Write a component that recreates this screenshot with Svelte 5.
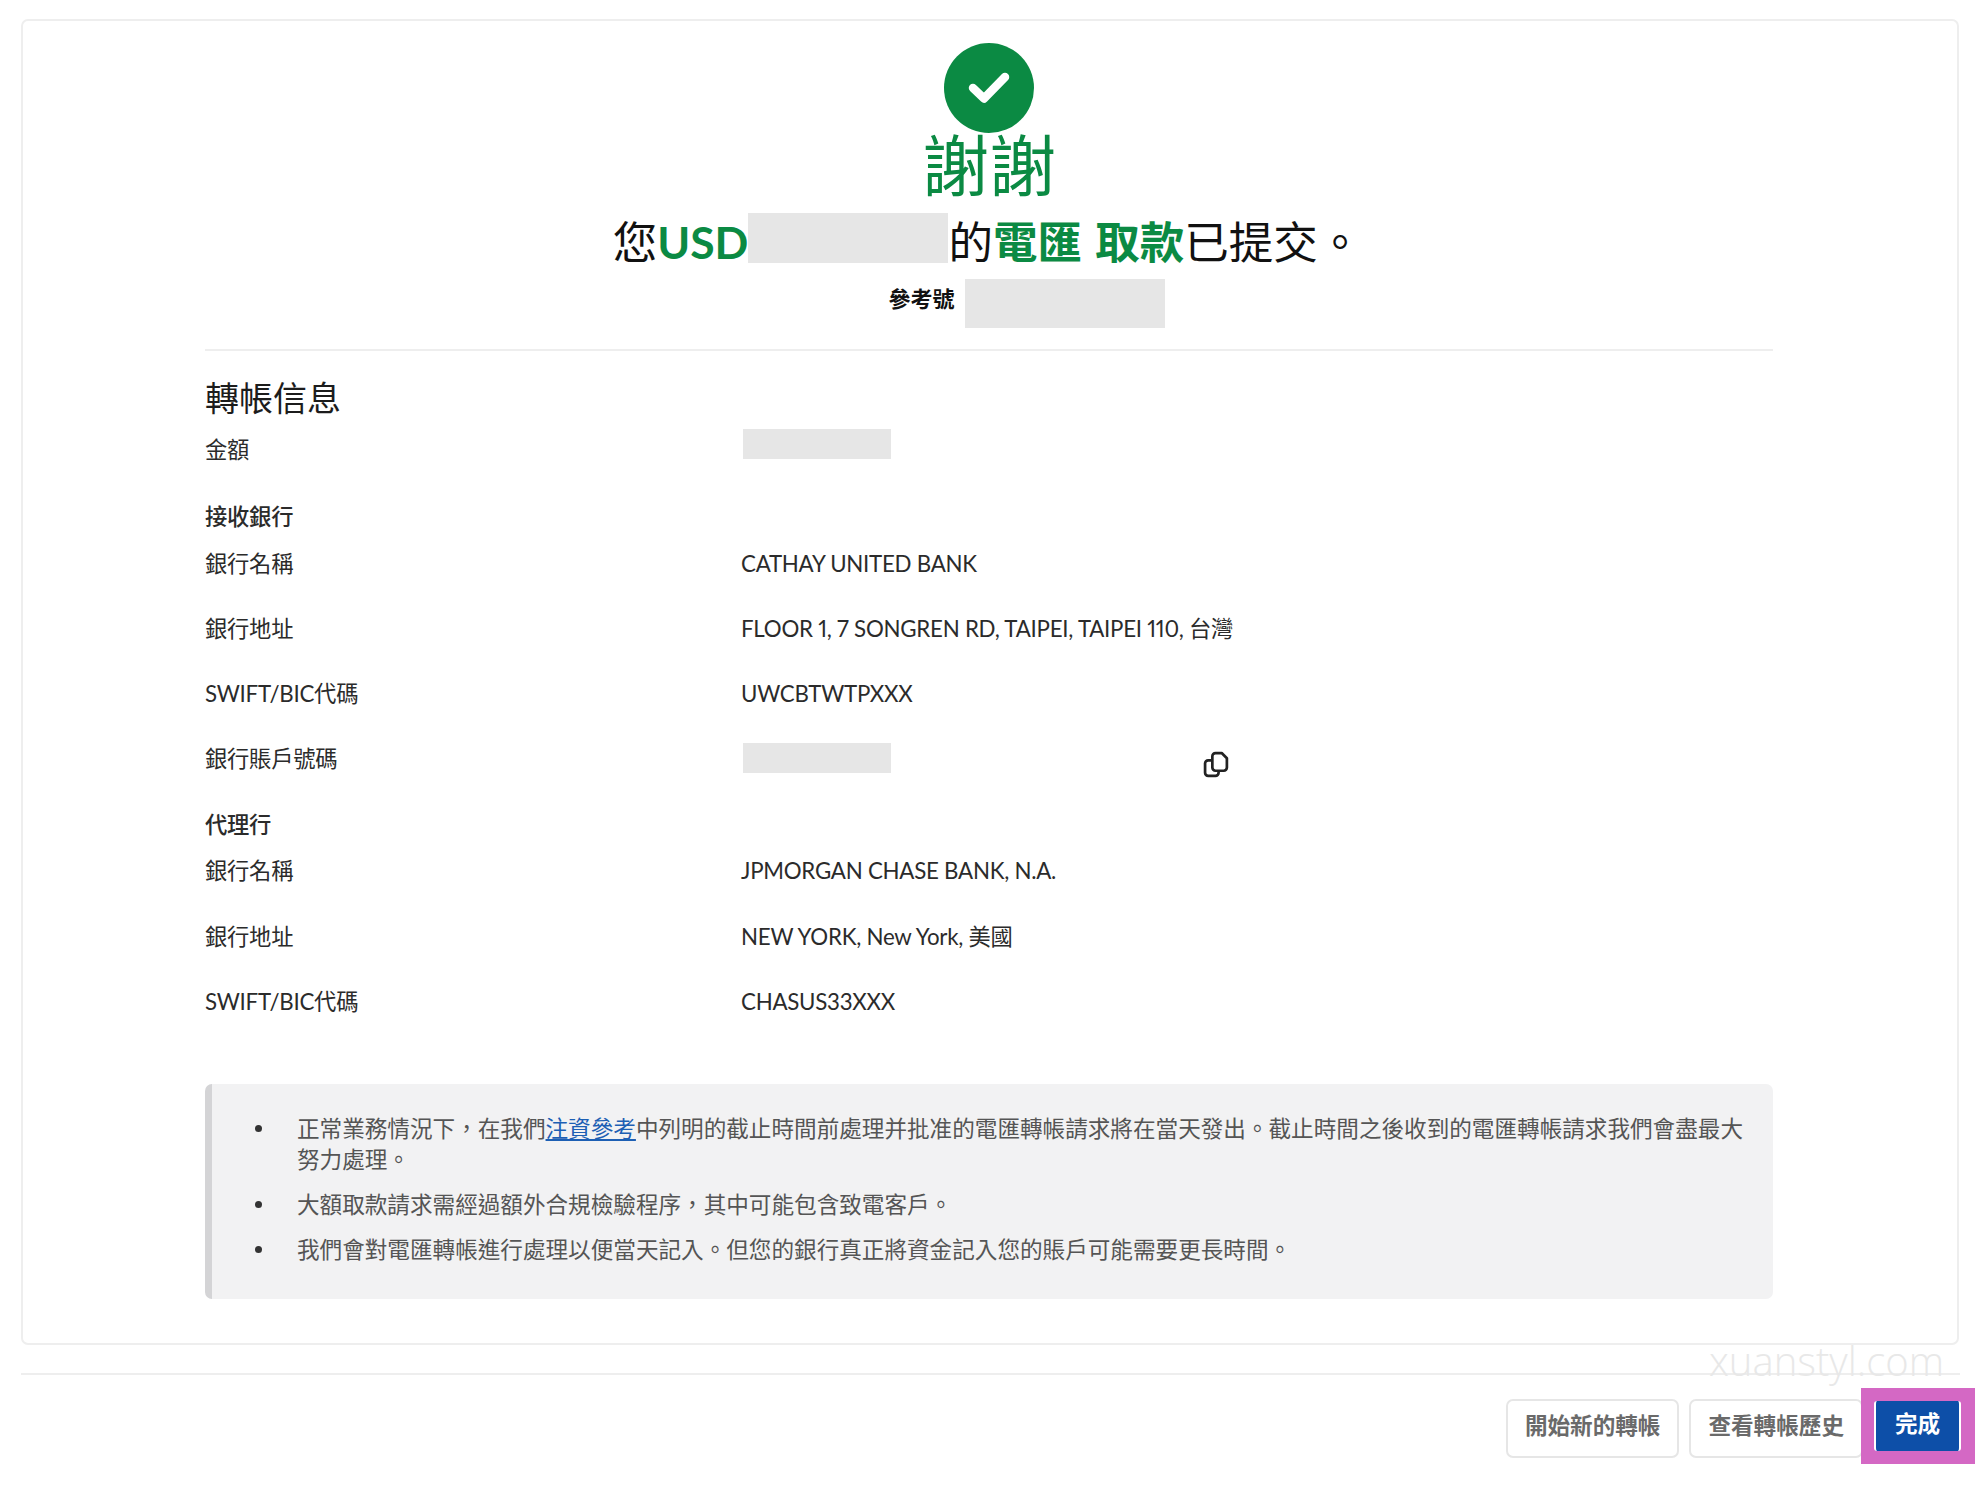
<script lang="ts">
  const receiving = [
    { label: "銀行名稱", value: "CATHAY UNITED BANK" },
    { label: "銀行地址", value: "FLOOR 1, 7 SONGREN RD, TAIPEI, TAIPEI 110, 台灣" },
    { label: "SWIFT/BIC代碼", value: "UWCBTWTPXXX" },
  ];

  const intermediary = [
    { label: "銀行名稱", value: "JPMORGAN CHASE BANK, N.A." },
    { label: "銀行地址", value: "NEW YORK, New York, 美國" },
    { label: "SWIFT/BIC代碼", value: "CHASUS33XXX" },
  ];
</script>

<div class="page">
  <div class="card">
    <div class="hero">
      <svg class="check" viewBox="0 0 90 90" aria-hidden="true">
        <circle cx="45" cy="45" r="45" fill="#0b8a43" />
        <path d="M29 45 L40 55.5 L61 34" fill="none" stroke="#fff" stroke-width="8.5" stroke-linecap="round" stroke-linejoin="round" />
      </svg>
      <div class="thanks">謝謝</div>
      <div class="summary">
        <span>您</span><b>USD</b><span class="mask amount"></span><span>的</span><b>電匯 取款</b><span>已提交。</span>
      </div>
      <div class="reference">
        <span class="ref-label">參考號</span>
        <span class="mask ref"></span>
      </div>
    </div>

    <div class="details">
      <h2>轉帳信息</h2>
      <div class="row first">
        <span>金額</span>
        <span class="mask value"></span>
      </div>

      <div class="group">接收銀行</div>
      {#each receiving as item}
        <div class="row">
          <span>{item.label}</span>
          <span>{item.value}</span>
        </div>
      {/each}
      <div class="row account">
        <span>銀行賬戶號碼</span>
        <span class="mask value"></span>
        <svg class="copy" viewBox="0 0 26 26" aria-hidden="true">
          <path d="M9 9 H5 a3 3 0 0 0 -3 3 V21 a3 3 0 0 0 3 3 H12 a3 3 0 0 0 3 -3 V19" fill="none" stroke="#222" stroke-width="2.6" />
          <path d="M12 2 H18 L23 7 V16 a3 3 0 0 1 -3 3 H12 a3 3 0 0 1 -3 -3 V5 a3 3 0 0 1 3 -3 Z" fill="none" stroke="#222" stroke-width="2.6" stroke-linejoin="round" />
        </svg>
      </div>

      <div class="group">代理行</div>
      {#each intermediary as item}
        <div class="row">
          <span>{item.label}</span>
          <span>{item.value}</span>
        </div>
      {/each}
    </div>

    <div class="notice">
      <ul>
        <li>正常業務情況下，在我們<a href="#refs">注資參考</a>中列明的截止時間前處理并批准的電匯轉帳請求將在當天發出。截止時間之後收到的電匯轉帳請求我們會盡最大努力處理。</li>
        <li>大額取款請求需經過額外合規檢驗程序，其中可能包含致電客戶。</li>
        <li>我們會對電匯轉帳進行處理以便當天記入。但您的銀行真正將資金記入您的賬戶可能需要更長時間。</li>
      </ul>
    </div>
  </div>

  <div class="footer">
    <span class="watermark">xuanstyl.com</span>
    <button class="btn">開始新的轉帳</button>
    <button class="btn second">查看轉帳歷史</button>
    <div class="highlight">
      <button class="btn primary">完成</button>
    </div>
  </div>
</div>

<style>
  :global(body) {
    margin: 0;
    background: #fff;
  }

  .page {
    width: 1987px;
    height: 1485px;
    box-sizing: border-box;
    padding: 19px 28px 0 21px;
    font-family: "Lato", "Noto Sans CJK TC", sans-serif;
    color: #2b2b2b;
    overflow: hidden;
  }

  .card {
    box-sizing: border-box;
    height: 1326px;
    padding: 22px 184px 0 182px;
    border: 2px solid #eee;
    border-radius: 7px;
  }

  .hero {
    display: flex;
    flex-direction: column;
    align-items: center;
    height: 306px;
    border-bottom: 2px solid #eee;
  }

  .check {
    width: 90px;
    height: 90px;
    flex: none;
  }

  .thanks {
    font-size: 67px;
    line-height: 64px;
    color: #0b8a43;
  }

  .summary {
    display: flex;
    align-items: flex-start;
    height: 50px;
    margin: 16px 0 0 -3px;
    font-size: 44.5px;
    line-height: 57px;
    word-spacing: 2.5px;
    color: #111;
    white-space: pre;
  }

  .summary b {
    font-weight: 700;
    color: #0b8a43;
  }

  .mask {
    display: block;
    background: #e6e6e6;
  }

  .amount {
    width: 200px;
    height: 50px;
  }

  .reference {
    display: flex;
    align-items: flex-start;
    margin: 16px 0 0 75px;
  }

  .ref-label {
    margin-right: 10px;
    font-size: 22px;
    font-weight: 700;
    line-height: 40px;
    color: #111;
  }

  .ref {
    width: 200px;
    height: 49px;
  }

  .details {
    padding-top: 29px;
    font-size: 22.3px;
    line-height: 30px;
    letter-spacing: -0.25px;
    font-variant-numeric: proportional-nums;
  }

  h2 {
    margin: 0;
    font-size: 34px;
    font-weight: 400;
    line-height: 36px;
    letter-spacing: 0;
    color: #1c1c1c;
  }

  .row {
    display: grid;
    grid-template-columns: 536px 1fr;
    height: 65.4px;
  }

  .row.first {
    height: 67px;
    margin-top: 19px;
    align-items: start;
  }

  .group {
    height: 46.5px;
    font-weight: 500;
  }

  .account {
    position: relative;
    height: 66px;
    margin-top: -1px;
  }

  .value {
    width: 148px;
    height: 30px;
    margin: -6px 0 0 2px;
  }

  .account .value {
    margin-top: -1px;
  }

  .copy {
    position: absolute;
    left: 998px;
    top: 7px;
    width: 27px;
    height: 27px;
  }

  .notice {
    box-sizing: border-box;
    height: 215px;
    margin-top: 32px;
    padding: 29px 24px 0 85px;
    border-left: 7px solid #d4d4d6;
    border-radius: 7px;
    background: #f2f2f3;
    font-size: 22.6px;
    line-height: 31px;
    color: #555;
  }

  ul {
    margin: 0;
    padding: 0;
    list-style: none;
  }

  li {
    position: relative;
  }

  li::before {
    content: "";
    position: absolute;
    left: -42px;
    top: 12px;
    width: 7px;
    height: 7px;
    border-radius: 50%;
    background: #333;
  }

  li + li {
    margin-top: 14px;
  }

  a {
    color: #1d5fb4;
    text-decoration: underline;
  }

  .footer {
    position: relative;
    display: flex;
    align-items: flex-start;
    justify-content: flex-end;
    height: 90px;
    margin-top: 28px;
    margin-right: -1px;
    padding-top: 24px;
    border-top: 2px solid #eee;
    box-sizing: border-box;
  }

  .watermark {
    position: absolute;
    right: 16px;
    top: -39px;
    font-family: "Open Sans", sans-serif;
    font-size: 40px;
    font-weight: 300;
    line-height: 50px;
    color: #e8e8e8;
  }

  .btn {
    box-sizing: border-box;
    height: 59px;
    padding: 0 17px 8px;
    margin-right: 10px;
    border: 2px solid #e6e6e6;
    border-radius: 7px;
    background: #fff;
    font: 700 22.6px "Lato", "Noto Sans CJK TC", sans-serif;
    color: #6a6a6a;
  }

  .btn.second {
    margin-right: 11px;
  }

  .highlight {
    display: flex;
    margin: -11px -15px 0 -13px;
    padding: 13px 14px 13px 13px;
    background: #d468c4;
  }

  .btn.primary {
    width: 87px;
    height: 50px;
    margin: 0;
    padding: 0 0 7px;
    border: 0;
    border-left: 2px solid #fff;
    border-right: 2px solid #fff;
    border-radius: 3px;
    background: #0d4fa8;
    color: #fff;
  }
</style>
